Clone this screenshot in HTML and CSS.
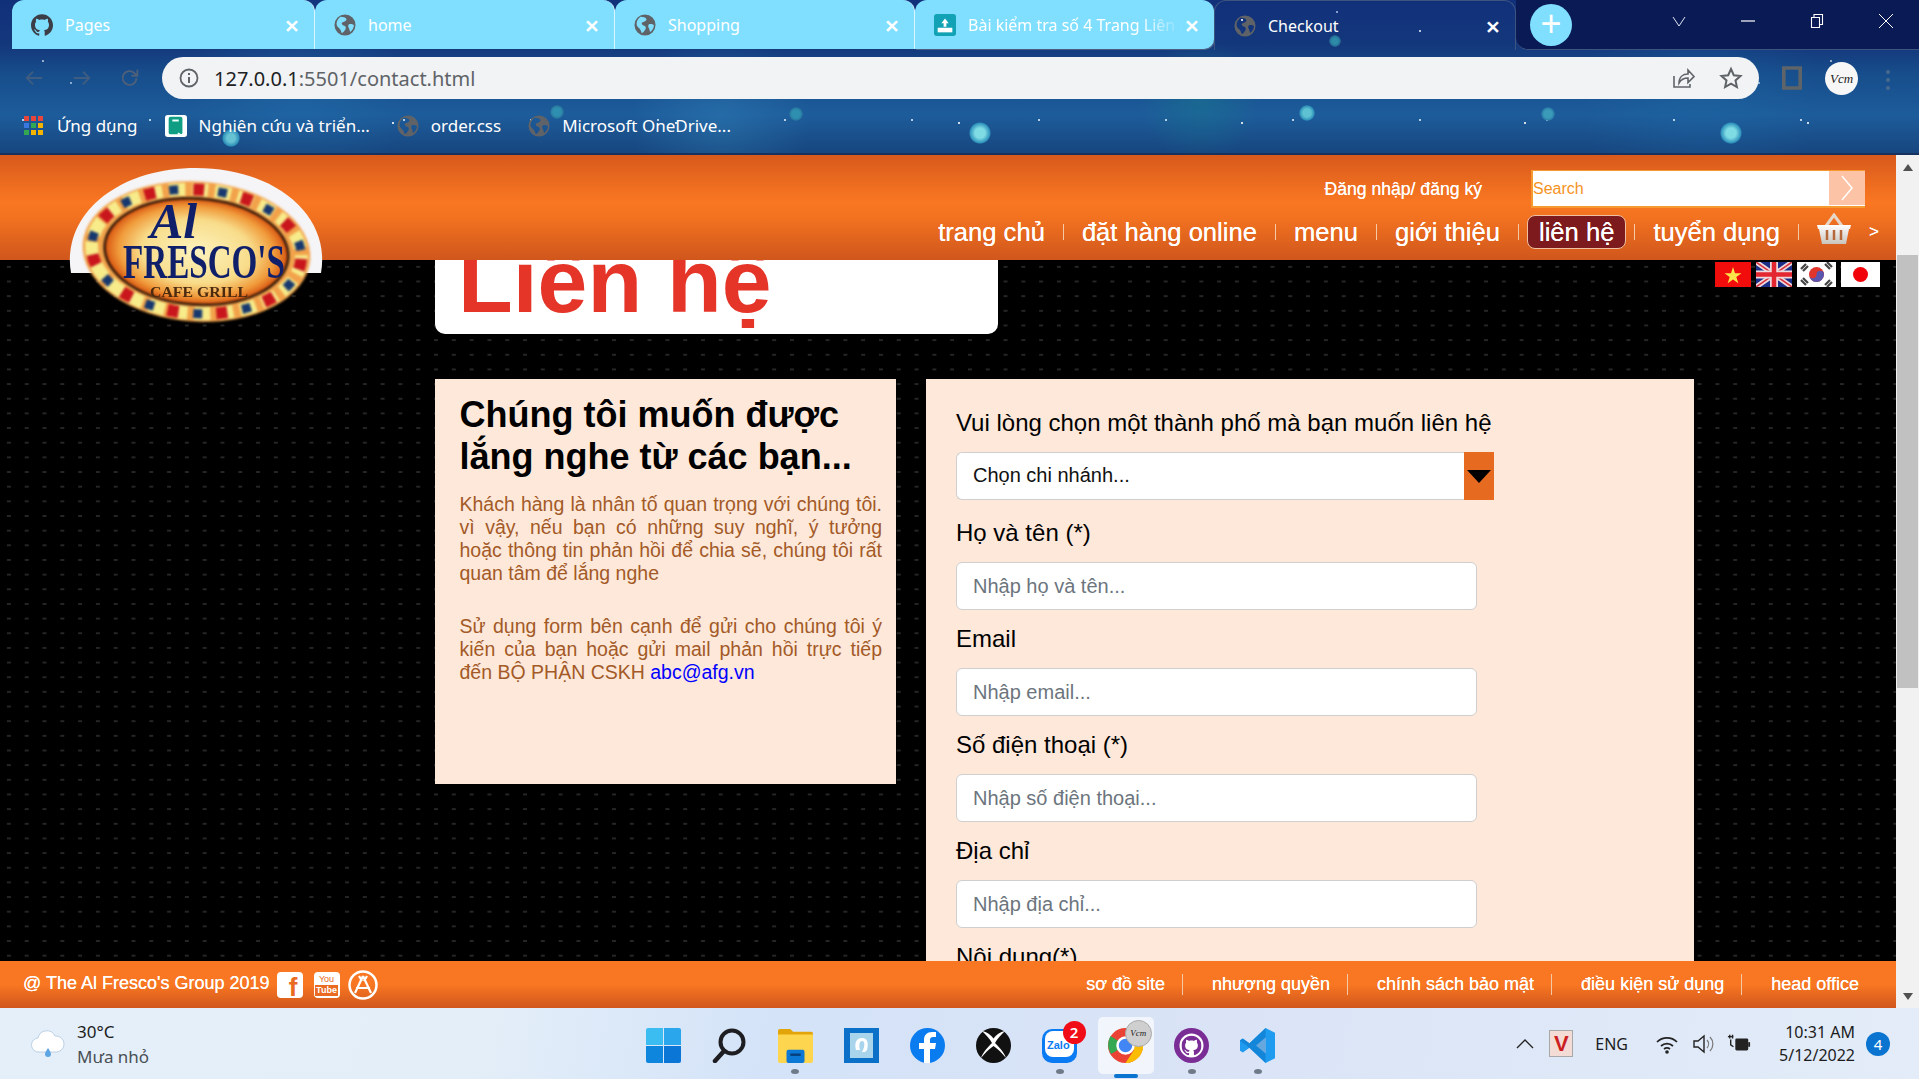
FILE: index.html
```html
<!DOCTYPE html>
<html lang="vi">
<head>
<meta charset="utf-8">
<title>Checkout</title>
<link rel="stylesheet" href="styles.css">
</head>
<body>
<svg class="defs" width="0" height="0">
  <symbol id="globe" viewBox="0 0 24 24"><path fill-rule="evenodd" fill="#5f6368" d="M12 .5a11.500 11.500 0 1 0 0 23 11.500 11.500 0 0 0 0-23zM7 3c3 .3 6 .6 6.500 2.500s-2 3-4 3.500-1 3 1 3.500 3 2 2 4-2.500 3.500-4 4.500c-1-3-1.500-4.500-3.500-6S2.500 11 3 9 5 4.500 7 3zM17 11c2-.5 4 0 4.800 1.500-.5 3-1.800 5.500-4.300 7-.5-2-.5-3-1.500-4.500s-.5-3.500 1-4z"/></symbol>
  <symbol id="gh" viewBox="0 0 24 24"><path d="M12 .297c-6.630 0-12 5.373-12 12 0 5.303 3.438 9.800 8.205 11.385.6.113.82-.258.82-.577 0-.285-.01-1.040-.015-2.040-3.338.724-4.042-1.610-4.042-1.610C4.422 18.070 3.633 17.700 3.633 17.700c-1.087-.744.084-.729.084-.729 1.205.084 1.838 1.236 1.838 1.236 1.070 1.835 2.809 1.305 3.495.998.108-.776.417-1.305.76-1.605-2.665-.3-5.466-1.332-5.466-5.930 0-1.310.465-2.380 1.235-3.220-.135-.303-.54-1.523.105-3.176 0 0 1.005-.322 3.300 1.230.96-.267 1.980-.399 3-.405 1.020.006 2.040.138 3 .405 2.280-1.552 3.285-1.230 3.285-1.230.645 1.653.24 2.873.12 3.176.765.84 1.230 1.910 1.230 3.220 0 4.610-2.805 5.625-5.475 5.920.42.36.81 1.096.81 2.220 0 1.606-.015 2.896-.015 3.286 0 .315.21.69.825.57C20.565 22.092 24 17.592 24 12.297c0-6.627-5.373-12-12-12"/></symbol>
</svg>

<header class="chrome">
  <div class="tabstrip">
    <div class="tab"><svg class="tab-icon gh-dark"><use href="#gh"/></svg><span class="tab-title">Pages</span><span class="tab-x">×</span></div>
    <div class="tab"><svg class="tab-icon"><use href="#globe"/></svg><span class="tab-title">home</span><span class="tab-x">×</span></div>
    <div class="tab"><svg class="tab-icon"><use href="#globe"/></svg><span class="tab-title">Shopping</span><span class="tab-x">×</span></div>
    <div class="tab tab-last"><svg class="tab-icon" viewBox="0 0 24 24"><rect width="24" height="24" rx="3" fill="#11a3b5"/><rect x="4" y="15" width="16" height="5" fill="#fff"/><path d="M12 5l4 5h-2.500v4h-3v-4H8z" fill="#fff"/></svg><span class="tab-title tab-fade">Bài kiểm tra số 4 Trang Liên hệ</span><span class="tab-x">×</span></div>
    <div class="tab tab-active"><svg class="tab-icon"><use href="#globe"/></svg><span class="tab-title">Checkout</span><span class="tab-x">×</span></div>
    <div class="tabrest">
      <div class="newtab">+</div>
      <div class="winctl">
        <svg class="win-icon" viewBox="0 0 14 14"><path d="M1 3l6 9 6-9" fill="none" stroke="#dfe6f2" stroke-width="1"/></svg>
        <svg class="win-icon" viewBox="0 0 14 14"><path d="M0 7h14" stroke="#fff" stroke-width="1.200"/></svg>
        <svg class="win-icon" viewBox="0 0 14 14"><path d="M1.500 3.500h8v10h-8zM4 3.500V.5h8.500v10h-3" fill="none" stroke="#fff" stroke-width="1.100"/></svg>
        <svg class="win-icon" viewBox="0 0 14 14"><path d="M0 0l14 14M14 0L0 14" stroke="#fff" stroke-width="1"/></svg>
      </div>
    </div>
  </div>
  <div class="toolbar">
    <svg class="tool-nav" viewBox="0 0 24 24"><path d="M21 12H4M11 5l-7 7 7 7" fill="none" stroke="#3f5d80" stroke-width="2"/></svg>
    <svg class="tool-nav" viewBox="0 0 24 24"><path d="M3 12h17M13 5l7 7-7 7" fill="none" stroke="#3f5d80" stroke-width="2"/></svg>
    <svg class="tool-nav" viewBox="0 0 24 24"><path d="M19 12a7.500 7.500 0 1 1-2.200-5.300L20 9.500M20 3v6.500h-6.500" fill="none" stroke="#4e6079" stroke-width="2"/></svg>
    <div class="omnibox">
      <svg class="omni-info" viewBox="0 0 20 20"><circle cx="10" cy="10" r="8.500" fill="none" stroke="#5f6368" stroke-width="1.800"/><path d="M10 9v6M10 5v2" stroke="#5f6368" stroke-width="2"/></svg>
      <span class="url"><b class="url-host">127.0.0.1</b>:5501/contact.html</span>
      <svg class="omni-act" viewBox="0 0 24 24"><path d="M3 10v11h16v-3M8 17c0-6 4-9 9-9V4l6 6.500-6 6V12c-4 0-7 1.500-9 5z" fill="none" stroke="#5f6368" stroke-width="1.600"/></svg>
      <svg class="omni-act" viewBox="0 0 24 24"><path d="M12 3l2.800 6.200 6.700.7-5 4.500 1.400 6.600-5.900-3.400L6.100 21l1.400-6.600-5-4.500 6.700-.7z" fill="none" stroke="#5f6368" stroke-width="2"/></svg>
    </div>
    <svg class="ext" viewBox="0 0 22 26"><path d="M2 2h18v22H2z" fill="none" stroke="#5e6468" stroke-width="4"/></svg>
    <div class="avatar">Vcm</div>
    <div class="kebab"><i></i><i></i><i></i></div>
  </div>
  <div class="bookmarks">
    <div class="bm"><span class="apps"><i class="c-r"></i><i class="c-r"></i><i class="c-r"></i><i class="c-b"></i><i class="c-g"></i><i class="c-y"></i><i class="c-g"></i><i class="c-y"></i><i class="c-y"></i></span>Ứng dụng</div>
    <div class="bm"><svg class="bm-icon" viewBox="0 0 24 24"><rect width="24" height="24" rx="3" fill="#fff"/><rect x="4" y="2" width="15" height="19" rx="2" fill="#0f9d84"/><path d="M8 6h7M14 20l5 3" stroke="#e9fff8" stroke-width="2"/></svg>Nghiên cứu và triển...</div>
    <div class="bm"><svg class="bm-icon"><use href="#globe"/></svg>order.css</div>
    <div class="bm"><svg class="bm-icon"><use href="#globe"/></svg>Microsoft OneDrive...</div>
  </div>
</header>

<div class="browser">
  <div class="viewport">
    <div class="site-head">
      <div class="head-top">
        <a class="login">Đăng nhập/ đăng ký</a>
        <div class="search"><input class="search-input" placeholder="Search"><span class="search-btn"><svg viewBox="0 0 14 28" class="search-chev"><path d="M2 2l10 12L2 26" fill="none" stroke="#fff" stroke-width="1.500"/></svg></span></div>
      </div>
      <nav class="nav">
        <a class="nav-link">trang chủ</a><i class="sep"></i>
        <a class="nav-link">đặt hàng online</a><i class="sep"></i>
        <a class="nav-link">menu</a><i class="sep"></i>
        <a class="nav-link">giới thiệu</a><i class="sep"></i>
        <a class="nav-link pill">liên hệ</a><i class="sep"></i>
        <a class="nav-link">tuyển dụng</a><i class="sep"></i>
        <svg class="basket" viewBox="0 0 34 32"><defs><linearGradient id="bk" x1="0" y1="0" x2="0" y2="1"><stop offset="0" stop-color="#fff"/><stop offset="1" stop-color="#c9c4bd"/></linearGradient></defs><path d="M9 13L17 2l8 11" fill="none" stroke="#e7d6c7" stroke-width="3"/><path d="M0 12h34l-1 4h-1l-3 15H5L2 16H1z" fill="url(#bk)"/><path d="M10 17v10M17 17v10M24 17v10" stroke="#b7683a" stroke-width="2.500"/></svg>
        <span class="nav-more">&gt;</span>
      </nav>
    </div>

    <main class="content">
      <div class="content-inner">
        <div class="title-card"><h1 class="title">Liên hệ</h1></div>
        <div class="panels">
          <section class="panel-left">
            <h2 class="lead">Chúng tôi muốn được lắng nghe từ các bạn...</h2>
            <p class="copy">Khách hàng là nhân tố quan trọng với chúng tôi. vì vậy, nếu bạn có những suy nghĩ, ý tưởng hoặc thông tin phản hồi để chia sẽ, chúng tôi rất quan tâm để lắng nghe</p>
            <p class="copy">Sử dụng form bên cạnh để gửi cho chúng tôi ý kiến của bạn hoặc gửi mail phản hồi trực tiếp đến BỘ PHẬN CSKH <a class="mail">abc@afg.vn</a></p>
          </section>
          <form class="panel-form">
            <label class="lbl">Vui lòng chọn một thành phố mà bạn muốn liên hệ</label>
            <div class="select"><span class="select-text">Chọn chi nhánh...</span><span class="select-arrow"><i class="tri"></i></span></div>
            <label class="lbl lbl-gap">Họ và tên (*)</label>
            <input class="field" placeholder="Nhập họ và tên...">
            <label class="lbl lbl-gap">Email</label>
            <input class="field" placeholder="Nhập email...">
            <label class="lbl lbl-gap">Số điện thoại (*)</label>
            <input class="field" placeholder="Nhập số điện thoại...">
            <label class="lbl lbl-gap">Địa chỉ</label>
            <input class="field" placeholder="Nhập địa chỉ...">
            <label class="lbl lbl-gap">Nội dung(*)</label>
          </form>
        </div>
      </div>
    </main>

    <footer class="site-foot">
      <div class="foot-left">
        <span class="copyr">@ The Al Fresco's Group 2019</span>
        <span class="soc soc-f">f</span>
        <span class="soc soc-y"><small>You</small><b>Tube</b></span>
        <svg class="soc-a" viewBox="0 0 30 30"><circle cx="15" cy="15" r="13.500" fill="none" stroke="#fff" stroke-width="2.500"/><path d="M15 6L7 23M15 6l8 17M8 18h14M11 6l3 5M19 6l-3 5" stroke="#fff" stroke-width="2.200" fill="none"/></svg>
      </div>
      <div class="foot-right">
        <a class="foot-link">sơ đồ site</a><i class="fsep"></i>
        <a class="foot-link">nhượng quyền</a><i class="fsep"></i>
        <a class="foot-link">chính sách bảo mật</a><i class="fsep"></i>
        <a class="foot-link">điều kiện sử dụng</a><i class="fsep"></i>
        <a class="foot-link">head office</a>
      </div>
    </footer>

    <svg class="logo" viewBox="0 0 260 160">
      <defs>
        <radialGradient id="lg"><stop offset="0" stop-color="#fdf3bd"/><stop offset=".6" stop-color="#f8dc8a"/><stop offset=".85" stop-color="#f09a3a"/><stop offset="1" stop-color="#d8520f"/></radialGradient>
      </defs>
      <path d="M5 107C-5 50 50 2 130 2s135 48 125 105z" fill="#f5f4f6"/>
      <g class="logo-blur" transform="rotate(4 130 85)">
        <ellipse cx="130.500" cy="85.500" rx="114" ry="70" fill="#f2a24a"/>
        <ellipse cx="130.500" cy="85.500" rx="105" ry="62" fill="none" stroke="#f7eb8a" stroke-width="13" stroke-dasharray="16 7"/>
        <ellipse cx="130.500" cy="85.500" rx="105" ry="62" fill="none" stroke="#c9161c" stroke-width="12" stroke-dasharray="11 38"/>
        <ellipse cx="130.500" cy="85.500" rx="105" ry="62" fill="none" stroke="#17386e" stroke-width="9" stroke-dasharray="9 40" stroke-dashoffset="24"/>
        <ellipse cx="130.500" cy="85.500" rx="92" ry="53" fill="url(#lg)" stroke="#2a1408" stroke-width="2.500"/>
      </g>
      <g class="logo-soft">
        <text class="logo-al" x="84" y="72">Al</text>
        <text class="logo-name" x="57" y="112" textLength="162" lengthAdjust="spacingAndGlyphs">FRESCO'S</text>
        <text class="logo-sub" x="84" y="131" textLength="98" lengthAdjust="spacingAndGlyphs">CAFE GRILL</text>
      </g>
    </svg>

    <div class="flags">
      <svg class="flag" viewBox="0 0 36 25"><rect width="36" height="25" fill="#f20d0d"/><path d="M18 5l2 6.200h6.500l-5.200 3.800 2 6.200-5.300-3.800-5.300 3.800 2-6.200-5.200-3.800H16z" fill="#fbe54a"/></svg>
      <svg class="flag" viewBox="0 0 36 25"><rect width="36" height="25" fill="#1c2f88"/><path d="M0 0l36 25M36 0L0 25" stroke="#efd9dc" stroke-width="5"/><path d="M0 0l36 25M36 0L0 25" stroke="#d8323c" stroke-width="1.500"/><path d="M18 0v25M0 12.500h36" stroke="#efd9dc" stroke-width="8"/><path d="M18 0v25M0 12.500h36" stroke="#e3262f" stroke-width="4.500"/></svg>
      <svg class="flag flag-w" viewBox="0 0 39 25"><rect width="39" height="25" fill="#fff"/><circle cx="19.500" cy="12.500" r="7.500" fill="#e0352b"/><path d="M12 12.500a3.750 3.750 0 0 0 7.500 0 3.750 3.750 0 0 1 7.500 0 7.500 7.500 0 0 1-15 0z" fill="#5a55ad"/><path d="M4 7l5-5M6 9l5-5M28 2l5 5M30 0l5 5M4 18l5 5M6 16l5 5M28 23l5-5M30 25l5-5" stroke="#444" stroke-width="2.200"/></svg>
      <svg class="flag flag-w" viewBox="0 0 39 25"><rect width="39" height="25" fill="#fff"/><circle cx="19.500" cy="12.500" r="7.500" fill="#f2050a"/></svg>
    </div>
  </div>

  <aside class="scrollbar">
    <span class="sb-up"></span>
    <span class="sb-thumb"></span>
    <span class="sb-down"></span>
  </aside>
</div>

<footer class="taskbar">
  <div class="weather">
    <svg class="weather-icon" viewBox="0 0 36 34"><path d="M9 25a7 7 0 0 1-1-14 9 9 0 0 1 17-2 8 8 0 0 1 2 16z" fill="#fff" stroke="#bcd0e6"/><path d="M18 21c2 3 3 5 3 6a3 3 0 0 1-6 0c0-1 1-3 3-6z" fill="#5ea5e4"/></svg>
    <div class="weather-text"><span class="w-temp">30°C</span><span class="w-desc">Mưa nhỏ</span></div>
  </div>
  <div class="apps-row">
    <div class="ti"><svg class="ti-svg" viewBox="0 0 35 35"><path d="M0 2a2 2 0 0 1 2-2h15v17H0z" fill="#3bbdf2"/><path d="M18 0h15a2 2 0 0 1 2 2v15H18z" fill="#2aa6ec"/><path d="M0 18h17v17H2a2 2 0 0 1-2-2z" fill="#0f86de"/><path d="M18 18h17v15a2 2 0 0 1-2 2H18z" fill="#0b76d6"/></svg></div>
    <div class="ti"><svg class="ti-svg" viewBox="0 0 35 35"><circle cx="20" cy="14" r="11.500" fill="none" stroke="#1e1e22" stroke-width="4"/><path d="M12 23L3 33" stroke="#1e1e22" stroke-width="4.500" stroke-linecap="round"/></svg></div>
    <div class="ti ti-open"><svg class="ti-svg" viewBox="0 0 37 37"><path d="M0 3a2 2 0 0 1 2-2h11l3 3h19a2 2 0 0 1 2 2v4H0z" fill="#e3a40a"/><path d="M0 7h37v28a2 2 0 0 1-2 2H2a2 2 0 0 1-2-2z" fill="#fdd54f"/><rect x="9" y="23" width="19" height="14" rx="2" fill="#0a78d4"/><rect x="13" y="27" width="11" height="2.500" fill="#063f7a"/></svg></div>
    <div class="ti"><svg class="ti-svg" viewBox="0 0 35 35"><rect width="35" height="35" fill="#0a70c8"/><rect x="6" y="5" width="23" height="25" fill="#a9d5ec"/><path d="M12 22c-2-8 1-12 6-12s7 4 5 12l-2 2h-3l1-2c2-4 2-9-1-9s-3 5-2 9z" fill="#fff"/></svg></div>
    <div class="ti"><svg class="ti-svg" viewBox="0 0 35 35"><circle cx="17.500" cy="17.500" r="17.500" fill="#0a7cf0"/><path d="M20 35V21h5l1-6h-6v-3c0-2 1-3 3-3h3V4h-4c-5 0-8 3-8 8v3h-5v6h5v14z" fill="#fff"/></svg></div>
    <div class="ti"><svg class="ti-svg" viewBox="0 0 35 35"><circle cx="17.500" cy="17.500" r="17.500" fill="#111"/><path d="M6 3c5 1 9 4 11.500 7.500C20 7 24 4 29 3c-4 4-8 8-10 12 4 4 9 9 11 15-4-5-8-9-12.500-12C13 21 9 25 5 30c2-6 7-11 11-15C14 11 10 7 6 3z" fill="#fff"/></svg></div>
    <div class="ti ti-open"><svg class="ti-svg" viewBox="0 0 35 35"><rect y="1" width="35" height="34" rx="10" fill="#0a7bf2"/><rect x="3" y="3" width="29" height="26" rx="8" fill="#fff"/><text class="zalo" x="5" y="21">Zalo</text></svg><span class="badge">2</span></div>
    <div class="ti ti-active"><svg class="ti-svg" viewBox="0 0 35 35"><circle cx="17.500" cy="17.500" r="17.500" fill="#ea4335"/><path d="M17.500 17.500L3 26a17.500 17.500 0 0 1-.5-18z" fill="#34a853"/><path d="M17.500 35A17.500 17.500 0 0 0 33 9H17.500L26 22z" fill="#fbbc05"/><circle cx="17.500" cy="17.500" r="8" fill="#4285f4" stroke="#fff" stroke-width="2.500"/></svg><span class="chrome-user">Vcm</span></div>
    <div class="ti ti-open"><svg class="ti-svg" viewBox="0 0 35 35"><circle cx="17.500" cy="17.500" r="17.500" fill="#7b2d96"/><circle cx="17.500" cy="17.500" r="12" fill="#fff"/><use href="#gh" x="7.500" y="7.500" width="20" height="20" class="gh-purple"/></svg></div>
    <div class="ti ti-open"><svg class="ti-svg" viewBox="0 0 37 37"><path d="M27 0l10 5v27l-10 5-17-16-7 5-3-2V13l3-2 7 5zM27 10l-10 8.500 10 8.500z" fill="#1f9cf0"/><path d="M27 0L10 16l-7-5-3 2v.5L7 18.500 27 37z" fill="#0a75c8" opacity=".55"/></svg></div>
  </div>
  <div class="tray">
    <svg class="tray-chev" viewBox="0 0 18 10"><path d="M1 9l8-8 8 8" fill="none" stroke="#222" stroke-width="1.300"/></svg>
    <span class="v-icon">V</span>
    <span class="eng">ENG</span>
    <svg class="tray-ic" viewBox="0 0 24 22"><path d="M2 9a14 14 0 0 1 20 0M6 13a9 9 0 0 1 12 0M9 16a5 5 0 0 1 6 0" fill="none" stroke="#222" stroke-width="1.700"/><circle cx="12" cy="19" r="1.800" fill="#222"/></svg>
    <svg class="tray-ic" viewBox="0 0 24 22"><path d="M3 8h4l6-5v16l-6-5H3z" fill="none" stroke="#222" stroke-width="1.400"/><path d="M16 7a6 6 0 0 1 0 8M19 4a10 10 0 0 1 0 14" fill="none" stroke="#777" stroke-width="1.200"/></svg>
    <svg class="tray-ic" viewBox="0 0 26 22"><rect x="9" y="5" width="14" height="13" rx="1.500" fill="#222"/><rect x="23" y="9" width="2" height="5" fill="#222"/><path d="M1 3h6M3 1v4M6 1v4M4 6v6l3 2" stroke="#222" stroke-width="1.500" fill="none"/></svg>
    <div class="clock"><span>10:31 AM</span><span>5/12/2022</span></div>
    <span class="notif">4</span>
  </div>
</footer>
</body>
</html>
```
FILE: styles.css
```css
* { box-sizing: border-box; }
html, body { margin: 0; padding: 0; }
body {
  width: 1919px; height: 1079px; overflow: hidden;
  display: flex; flex-direction: column;
  font-family: "Liberation Sans", Arial, sans-serif;
  background: #000;
}
.defs { display: block; height: 0; width: 0; }

/* browser chrome */
.chrome {
  height: 155px; flex: none; color: #fff;
  font-family: "Noto Sans", "Open Sans", sans-serif;
  border-bottom: 2px solid #17315f;
  background-color: #1b5492;
  background-image:
    radial-gradient(circle 11px at 980px 133px, #7fdbe4 0 5px, #2f93bc 90%, transparent 100%),
    radial-gradient(circle 11px at 1731px 133px, #7fdbe4 0 5px, #2f93bc 90%, transparent 100%),
    radial-gradient(circle 8px at 1307px 113px, #5fc2d2 0 4px, #2d8fb8 90%, transparent 100%),
    radial-gradient(circle 7px at 1548px 114px, #3b9ab8 0 4px, #2a7ca8 90%, transparent 100%),
    radial-gradient(circle 9px at 231px 138px, #67c3d4 0 4px, #2d8fb8 90%, transparent 100%),
    radial-gradient(circle 7px at 557px 112px, #2f8fb0 0 4px, #27769f 90%, transparent 100%),
    radial-gradient(circle 7px at 796px 114px, #2f8fb0 0 4px, #27769f 90%, transparent 100%),
    radial-gradient(circle 6px at 1335px 41px, #2e8ba8 0 3px, #246b95 90%, transparent 100%),
    radial-gradient(circle 1px at 23px 31px, rgba(232, 246, 255, .75) 0 100%, transparent 100%),
    radial-gradient(circle .8px at 71px 12px, rgba(207, 230, 255, .6) 0 100%, transparent 100%),
    radial-gradient(circle .8px at 43px 61px, rgba(255, 255, 255, .55) 0 100%, transparent 100%),
    radial-gradient(circle 1.200px at 110px 20px, rgba(255, 255, 255, .8) 0 100%, transparent 100%),
    radial-gradient(circle .6px at 9px 9px, rgba(188, 220, 245, .45) 0 100%, transparent 100%),
    radial-gradient(circle 60px at 1200px 100px, rgba(24, 120, 140, .5), transparent 100%),
    radial-gradient(circle 90px at 720px 120px, rgba(60, 150, 200, .28), transparent 100%),
    radial-gradient(circle 110px at 300px 90px, rgba(40, 130, 190, .25), transparent 100%),
    radial-gradient(circle 120px at 1700px 95px, rgba(30, 110, 170, .3), transparent 100%),
    linear-gradient(180deg, #11307a 0, #14387c 30%, #174d8b 48%, #1d5c9b 75%, #17467f 100%);
  background-size: auto, auto, auto, auto, auto, auto, auto, auto, 127px 89px, 211px 71px, 149px 97px, 283px 103px, 61px 43px, auto, auto, auto, auto, auto;
}
.tabstrip { height: 50px; display: flex; padding-left: 12px; }
.tab {
  width: 300px; height: 49px; background: #80dfff;
  display: flex; align-items: center; padding: 0 12px 0 19px;
  border-top-left-radius: 12px; border-top-right-radius: 12px;
  border-right: 1px solid #d9f6ff;
  font-size: 16px; flex: none;
}
.tab:first-child { width: 303px; }
.tab-last { width: 299px; border-right: 0; border-radius: 12px 12px 10px 0; box-shadow: 1px 1px 0 #4b5f85; }
.tab-active { background: transparent; border: 1px solid #3e5480; border-bottom: 0; width: 302px; height: 50px; border-right-color: #3e5480; }
.tab-icon { width: 22px; height: 26px; flex: none; margin-right: 12px; }
.gh-dark { fill: #3b3e46; }
.tab-title { flex: 1; white-space: nowrap; overflow: hidden; }
.tab-fade { -webkit-mask-image: linear-gradient(90deg, #000 80%, transparent 100%); mask-image: linear-gradient(90deg, #000 80%, transparent 100%); }
.tab-x { width: 20px; text-align: center; font-size: 26px; font-weight: 600; line-height: 20px; }
.tabrest { flex: 1; height: 50px; display: flex; background: #0a1a55; border-bottom: 1px solid #3e5480; border-bottom-left-radius: 12px; }
.newtab {
  width: 42px; height: 42px; margin: 4px 0 0 14px; border-radius: 50%; flex: none;
  background: #80dfff; color: #fff; text-align: center;
  font: 400 36px/40px "Liberation Sans", sans-serif;
}
.winctl { flex: 1; display: flex; justify-content: flex-end; padding: 14px 26px 0 0; gap: 55px; }
.win-icon { width: 14px; height: 14px; }

.toolbar { height: 55px; display: flex; align-items: flex-start; padding: 7px 0 0 23px; }
.tool-nav { width: 22px; height: 22px; margin: 10px 26px 0 0; flex: none; }
.tool-nav + .tool-nav + .tool-nav { margin-right: 0; }
.omnibox {
  margin-left: 21px; width: 1597px; height: 42px; flex: none;
  background: #f1f3f4; border-radius: 21px;
  display: flex; align-items: center; padding: 0 16px 0 17px;
  color: #5f6368; font-size: 20px;
}
.omni-info { width: 20px; height: 20px; margin-right: 15px; }
.url { flex: 1; }
.url-host { color: #202124; font-weight: 400; }
.omni-act { width: 24px; height: 24px; margin-left: 24px; }
.ext { width: 20px; height: 26px; margin: 8px 0 0 23px; flex: none; }
.avatar {
  width: 33px; height: 33px; margin: 5px 0 0 23px; border-radius: 50%; background: #f7f7f7; flex: none;
  color: #222; font: italic 13px/33px "Liberation Serif", serif; text-align: center;
}
.kebab { display: flex; flex-direction: column; gap: 4px; margin: 13px 0 0 28px; }
.kebab i { width: 4px; height: 4px; border-radius: 50%; background: #4a6a8c; }

.bookmarks { height: 48px; display: flex; align-items: center; padding: 0 0 7px 24px; font-size: 17px; white-space: nowrap; }
.bm { display: flex; align-items: center; margin-right: 27px; }
.apps { display: grid; grid-template-columns: repeat(3, 5px); gap: 2px; margin-right: 14px; }
.apps i { width: 5px; height: 5px; }
.c-r { background: #e8453c; } .c-b { background: #3a78e0; } .c-g { background: #33a852; } .c-y { background: #f4b400; }
.bm-icon { width: 22px; height: 26px; margin-right: 12px; flex: none; }

/* page */
.browser { height: 853px; flex: none; display: flex; }
.viewport { width: 1896px; position: relative; display: flex; flex-direction: column; overflow: hidden; }
.site-head {
  height: 105px; flex: none; color: #fff; position: relative; z-index: 2;
  background: linear-gradient(180deg, #d85a1c 0, #f97722 45%, #f27220 60%, #d0561c 100%);
}
.head-top { display: flex; justify-content: flex-end; align-items: center; height: 38px; padding-right: 31px; gap: 49px; position: absolute; right: 0; left: 0; top: 15px; }
.login { font-size: 17.600px; text-shadow: 0 0 .6px #fff; }
.search { width: 334px; height: 38px; background: #fff; border: 2px solid #f49a30; border-top-width: 1px; border-right: 0; display: flex; }
.search-input { flex: 1; min-width: 0; border: 0; outline: 0; padding: 0; background: transparent; font: 16px "Liberation Sans", sans-serif; }
.search-input::placeholder { color: #f6931e; opacity: 1; }
.search-btn { width: 36px; height: 34px; background: #fcc3a6; display: flex; align-items: center; justify-content: center; }
.search-chev { width: 14px; height: 28px; }
.nav { position: absolute; top: 60px; right: 17px; height: 34px; display: flex; align-items: center; font-size: 25.600px; white-space: nowrap; text-shadow: 0 0 .4px #fff; }
.nav-link { color: #fff; line-height: 34px; }
.sep { width: 1px; height: 16px; background: #f3c9a6; margin: 0 18px; }
.pill { background: #7d1a1e; border: 1px solid #eebfa0; border-radius: 8px; padding: 0 11px; margin: 0 -10px; height: 34px; line-height: 33px; }
.basket { width: 34px; height: 32px; margin-top: -6px; }
.nav-more { font-size: 17px; margin-left: 18px; }

.content {
  flex: 1; min-height: 0; overflow: hidden;
  background-color: #000;
  background-image: radial-gradient(ellipse 2px 1.300px at 9px 7px, #262626 0 100%, transparent 100%);
  background-size: 17.800px 14.670px;
}
.content-inner { padding-left: 435px; width: 1896px; }
.title-card { margin-top: -46px; width: 563px; height: 120px; background: #fff; border-radius: 0 0 10px 10px; padding: 15px 0 0 23px; }
.title { margin: 0; color: #e53529; font-size: 89.600px; font-weight: 700; line-height: 105px; }
.panels { display: flex; gap: 30px; margin-top: 45px; align-items: flex-start; }
.panel-left { width: 461px; height: 405px; background: #fde8da; padding: 15px 14px 0 24.500px; flex: none; }
.lead { margin: 0 0 15px; color: #000; font-size: 36px; line-height: 42px; font-weight: 700; }
.copy { margin: 0 0 30px; color: #a35a27; font-size: 19.500px; line-height: 23px; text-align: justify; }
.mail { color: #0000ff; }
.panel-form { width: 768px; height: 700px; background: #fde8da; padding: 30px 0 0 30px; flex: none; display: flex; flex-direction: column; align-items: flex-start; }
.lbl { color: #000; font-size: 24px; line-height: 28px; margin-bottom: 15px; white-space: nowrap; }
.lbl-gap { margin-top: 15px; }
.select { width: 538px; height: 48px; margin-bottom: 4px; display: flex; background: #fff; border: 1px solid #cfcfcf; border-right: 0; border-radius: 6px 0 0 6px; flex: none; }
.select-text { flex: 1; padding-left: 16px; font-size: 20px; line-height: 44px; color: #111; }
.select-arrow { width: 30px; height: 48px; margin-top: -1px; background: #e76a21; display: flex; align-items: center; justify-content: center; }
.tri { width: 0; height: 0; border: 12px solid transparent; border-top: 13px solid #000; border-bottom: 0; }
.field { width: 521px; height: 48px; flex: none; border: 1px solid #cfcfcf; border-radius: 6px; padding: 0 16px; background: #fff; font: 20px "Liberation Sans", sans-serif; outline: 0; }
.field::placeholder { color: #6c757d; opacity: 1; }

.site-foot {
  height: 47px; flex: none; color: #fff; position: relative; z-index: 2;
  display: flex; justify-content: space-between; align-items: center; padding: 0 37px 0 23px;
  background: linear-gradient(180deg, #f97722 0, #f97722 50%, #d0561c 100%);
}
.foot-left { display: flex; align-items: center; }
.copyr { font-size: 18px; text-shadow: 0 0 .6px #fff; margin-right: 7px; margin-top: -3px; }
.soc { display: block; width: 26px; height: 26px; background: #fff; border-radius: 4px; color: #e96a20; flex: none; }
.soc-f { font: 700 26px/30px "Liberation Sans", sans-serif; text-align: right; padding-right: 5px; overflow: hidden; }
.soc-y { margin-left: 11px; display: flex; flex-direction: column; align-items: center; font-size: 9px; line-height: 11px; padding-top: 2px; }
.soc-y small { font-size: 9px; }
.soc-y b { background: #e96a20; color: #fff; padding: 0 1px; font-size: 9px; }
.soc-a { width: 30px; height: 30px; margin-left: 8px; }
.foot-right { display: flex; align-items: center; font-size: 18px; text-shadow: 0 0 .6px #fff; }
.fsep { width: 1px; height: 21px; background: #f3c9a6; margin: 0 29px 0 17px; }
.foot-link { white-space: nowrap; }

.logo { position: absolute; left: 66px; top: 11px; width: 260px; height: 160px; z-index: 3; }
.logo-blur { filter: blur(1px); }
.logo-soft { filter: blur(.5px); }
.logo-al { font: italic 700 50px "Liberation Serif", serif; fill: #0f1f6a; }
.logo-name { font: 700 48px "Liberation Serif", serif; fill: #0f1f6a; }
.logo-sub { font: 700 15px "Liberation Serif", serif; fill: #4b2a10; }
.flags { position: absolute; top: 107px; right: 16px; display: flex; gap: 5px; z-index: 3; }
.flag { width: 36px; height: 25px; display: block; }
.flag-w { width: 39px; }

.scrollbar { width: 23px; flex: none; background: #f1f1f1; display: flex; flex-direction: column; align-items: center; }
.sb-up, .sb-down { width: 0; height: 0; border: 5px solid transparent; flex: none; }
.sb-up { border-bottom: 7px solid #505050; border-top: 0; margin-top: 9px; }
.sb-thumb { width: 21px; height: 433px; background: #c1c1c1; margin-top: 84px; flex: none; }
.sb-down { border-top: 7px solid #505050; border-bottom: 0; margin-top: auto; margin-bottom: 8px; }

/* taskbar */
.taskbar {
  height: 71px; flex: none; display: flex; color: #1c1c1c;
  font-family: "Noto Sans", "Open Sans", sans-serif;
  background: linear-gradient(100deg, #e4eff9 0, #e3eef8 25%, #d4e3f8 40%, #d9e3f6 60%, #e3ecf8 100%);
}
.weather { width: 630px; flex: none; display: flex; align-items: center; padding-left: 30px; }
.weather-icon { width: 36px; height: 34px; margin-right: 11px; }
.weather-text { display: flex; flex-direction: column; font-size: 17px; line-height: 25px; }
.w-desc { color: #4a4f55; }
.apps-row { display: flex; height: 71px; }
.ti { width: 66.100px; height: 71px; position: relative; display: flex; align-items: flex-start; justify-content: center; padding-top: 20px; flex: none; }
.ti-svg { width: 35px; height: 35px; }
.ti-open::after { content: ""; position: absolute; left: 50%; bottom: 5px; width: 8px; height: 5px; margin-left: -4px; border-radius: 50%; background: #6e7a88; }
.ti-active::before { content: ""; position: absolute; left: 5px; right: 5px; top: 9px; bottom: 5px; border-radius: 5px; background: rgba(255, 255, 255, .65); }
.ti-active::after { content: ""; position: absolute; left: 50%; bottom: 1px; width: 24px; height: 4px; margin-left: -12px; border-radius: 2px; background: #0a74d0; }
.ti-active .ti-svg { position: relative; }
.gh-purple { fill: #7b2d96; }
.zalo { font: 700 11px "Liberation Sans", sans-serif; fill: #0a7bf2; }
.badge { position: absolute; top: 13px; left: 36px; width: 23px; height: 23px; border-radius: 50%; background: #f10d17; color: #fff; text-align: center; font-size: 15px; line-height: 23px; font-weight: 600; }
.chrome-user { position: absolute; top: 12px; left: 32px; width: 27px; height: 27px; border-radius: 50%; background: #cfcfcf; border: 1px solid #aaa; font: italic 9px/25px "Liberation Serif", serif; text-align: center; }
.tray { flex: 1; display: flex; align-items: center; justify-content: flex-end; padding-right: 29px; }
.tray-chev { width: 18px; height: 10px; }
.v-icon { width: 24px; height: 27px; margin-left: 15px; background: #f4dcd6; border: 1px solid #a8a8a8; color: #cc1f1f; text-align: center; font: 700 22px/25px "Liberation Sans", sans-serif; }
.eng { font-size: 16px; margin: 0 27px 0 22px; }
.tray-ic { width: 24px; height: 22px; margin-right: 12px; }
.clock { display: flex; flex-direction: column; align-items: flex-end; font-size: 16px; line-height: 23px; width: 86px; margin-left: 6px; }
.notif { width: 24px; height: 24px; margin-left: 11px; border-radius: 50%; background: #0a74d0; color: #fff; text-align: center; font-size: 15px; line-height: 24px; }
```
